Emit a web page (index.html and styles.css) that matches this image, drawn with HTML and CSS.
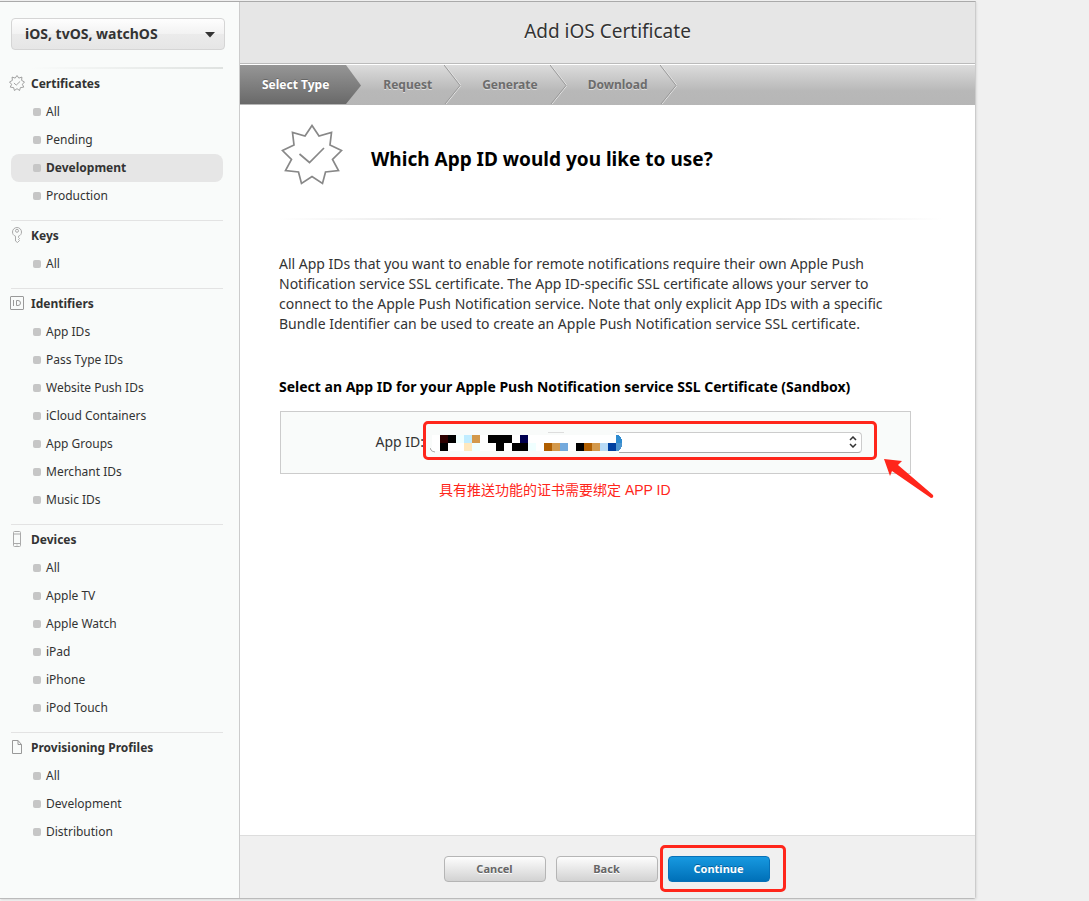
FILE: index.html
```html
<!doctype html>
<html lang="en">

<head>
    <meta charset="utf-8">
    <meta name="viewport" content="width=device-width, initial-scale=1">
    <title>Add iOS Certificate</title>
    <link rel="stylesheet" href="styles.css">
</head>

<body>

    <div class="wrapper">
        <aside class="sidebar">
            <div class="platform">
                <select class="platform-select" aria-label="Platform">
                    <option>iOS, tvOS, watchOS</option>
                </select>
                <svg class="caret" width="10" height="6" viewBox="0 0 10 6"><path d="M0 0h10L5 5.500z" fill="#333" /></svg>
            </div>

            <nav>
                <section class="group first">
                    <h2>
                        <svg width="16" height="16" viewBox="0 0 62 62" fill="none" stroke="#888" stroke-width="3">
                            <path d="M31 2L38 12L50 8L49 21L60 27L52 36L57 47L44 49L41 60L31 53L21 60L18 49L5 47L10 36L2 27L13 21L12 8L24 12Z" />
                            <path d="M19 31L28 39L43 25" />
                        </svg>
                        Certificates
                    </h2>
                    <ul>
                        <li><a href="#">All</a></li>
                        <li><a href="#">Pending</a></li>
                        <li><a href="#" class="active">Development</a></li>
                        <li><a href="#">Production</a></li>
                    </ul>
                </section>
                <section class="group">
                    <h2>
                        <svg width="16" height="16" viewBox="0 0 16 16" fill="none" stroke="#aaa">
                            <path d="M6.500 9.200C4.500 8.500 3.500 7 3.500 5a4.500 4.500 0 0 1 9 0c0 2-1 3.500-3 4.200v1.300l1 1-1 1 1 1-2 2-2-1.500z" />
                            <circle cx="8" cy="3.800" r="1.500" />
                        </svg>
                        Keys
                    </h2>
                    <ul>
                        <li><a href="#">All</a></li>
                    </ul>
                </section>
                <section class="group">
                    <h2>
                        <svg width="16" height="16" viewBox="0 0 16 16" fill="none" stroke="#999">
                            <rect x="1.500" y="1.500" width="13" height="13" rx=".5" />
                            <path d="M4.500 5v6M7.500 5.500v5h1.500q2.500 0 2.500-2.500t-2.500-2.500z" />
                        </svg>
                        Identifiers
                    </h2>
                    <ul>
                        <li><a href="#">App IDs</a></li>
                        <li><a href="#">Pass Type IDs</a></li>
                        <li><a href="#">Website Push IDs</a></li>
                        <li><a href="#">iCloud Containers</a></li>
                        <li><a href="#">App Groups</a></li>
                        <li><a href="#">Merchant IDs</a></li>
                        <li><a href="#">Music IDs</a></li>
                    </ul>
                </section>
                <section class="group">
                    <h2>
                        <svg width="16" height="16" viewBox="0 0 16 16" fill="none" stroke="#aaa">
                            <rect x="4.500" y=".5" width="7" height="15" rx="1" />
                            <path d="M4.500 3h7M4.500 12.500h7M7.500 14h1" />
                        </svg>
                        Devices
                    </h2>
                    <ul>
                        <li><a href="#">All</a></li>
                        <li><a href="#">Apple TV</a></li>
                        <li><a href="#">Apple Watch</a></li>
                        <li><a href="#">iPad</a></li>
                        <li><a href="#">iPhone</a></li>
                        <li><a href="#">iPod Touch</a></li>
                    </ul>
                </section>
                <section class="group">
                    <h2>
                        <svg width="16" height="16" viewBox="0 0 16 16" fill="none" stroke="#999">
                            <path d="M3.500 1.500h5.500l3.500 4v9h-9zM9 1.500v4h3.500" />
                        </svg>
                        Provisioning Profiles
                    </h2>
                    <ul>
                        <li><a href="#">All</a></li>
                        <li><a href="#">Development</a></li>
                        <li><a href="#">Distribution</a></li>
                    </ul>
                </section>
            </nav>
        </aside>

        <main class="main">
            <header class="title">
                <h1>Add iOS Certificate</h1>
            </header>

            <ol class="steps">
                <li class="current">
                    <span>Select Type</span>
                    <svg width="17" height="40" viewBox="0 0 17 40">
                        <defs>
                            <linearGradient id="dark" x1="0" y1="0" x2="0" y2="1">
                                <stop offset="0" stop-color="#969696" />
                                <stop offset="1" stop-color="#696969" />
                            </linearGradient>
                        </defs>
                        <path d="M0 0h1l15 20.500L1 39H0z" fill="url(#dark)" />
                    </svg>
                </li>
                <li>
                    <span>Request</span>
                    <svg width="17" height="40" viewBox="0 0 17 40" fill="none">
                        <path d="M1 0L17 20.500L2 39" stroke="#e4e4e4" />
                        <path d="M0 0L16 20.500L1 39" stroke="#999" />
                    </svg>
                </li>
                <li>
                    <span>Generate</span>
                    <svg width="17" height="40" viewBox="0 0 17 40" fill="none">
                        <path d="M1 0L17 20.500L2 39" stroke="#e4e4e4" />
                        <path d="M0 0L16 20.500L1 39" stroke="#999" />
                    </svg>
                </li>
                <li>
                    <span>Download</span>
                    <svg width="17" height="40" viewBox="0 0 17 40" fill="none">
                        <path d="M1 0L17 20.500L2 39" stroke="#e4e4e4" />
                        <path d="M0 0L16 20.500L1 39" stroke="#999" />
                    </svg>
                </li>
            </ol>

            <div class="content">
                <div class="question">
                    <svg width="62" height="62" viewBox="0 0 62 62" fill="none" stroke="#888" stroke-width="1.700">
                        <path d="M31 1.500L38 12L50.500 8.500L49 21L60.500 26.500L51.500 35.500L57.500 46.500L44.500 48L41.500 59.500L31 52.500L20.500 59.500L17.500 48L4.500 46.500L10.500 35.500L1.500 26.500L13 21L11.500 8.500L24 12Z" />
                        <path d="M18.500 30L28.500 38.500L43 24" />
                    </svg>
                    <h2>Which App ID would you like to use?</h2>
                </div>

                <p class="text">
                    All App IDs that you want to enable for remote notifications require their own Apple Push<br>
                    Notification service SSL certificate. The App ID-specific SSL certificate allows your server to<br>
                    connect to the Apple Push Notification service. Note that only explicit App IDs with a specific<br>
                    Bundle Identifier can be used to create an Apple Push Notification service SSL certificate.
                </p>

                <h3>Select an App ID for your Apple Push Notification service SSL Certificate (Sandbox)</h3>

                <div class="field">
                    <label for="appid">App ID:</label>
                    <div class="picker">
                        <select id="appid">
                            <option></option>
                        </select>
                        <svg class="updown" width="8" height="12" viewBox="0 0 8 12" fill="none" stroke="#333" stroke-width="1.500"><path d="M1 4l3-3 3 3M1 8l3 3 3-3" /></svg>
                        <svg class="mosaic" width="192" height="23" viewBox="0 0 192 23" shape-rendering="crispEdges">
                            <path d="M0 0h186v4H0zM0 19h189v4H0zM0 0h3v17H0z" fill="#f9fbfa" />
                            <path d="M118 1h16" stroke="#ddd" />
                            <path d="M2 4h188v16H2z" fill="#fff" />
                            <path d="M0 17q1 4 5 4" stroke="#aaa" fill="none" shape-rendering="auto" />
                            <path d="M10 4h8v8h-8z" fill="#2d0000" />
                            <path d="M18 4h8v8h-8zM58 4h24v8H58zM10 12h8v8h-8zM66 12h8v8h-8zM82 12h16v8H82zM146 12h8v8h-8z" fill="#000" />
                            <path d="M26 4h8v8h-8zM42 12h8v8h-8zM98 12h8v8h-8z" fill="#f0ffff" />
                            <path d="M34 4h8v8h-8z" fill="#c0ecff" />
                            <path d="M42 4h8v8h-8zM122 12h8v8h-8zM162 12h8v8h-8z" fill="#d3984a" />
                            <path d="M90 4h8v8h-8z" fill="#000050" />
                            <path d="M34 12h8v8h-8z" fill="#ffe8bd" />
                            <path d="M114 12h8v8h-8zM154 12h8v8h-8z" fill="#b05e00" />
                            <path d="M130 12h8v8h-8z" fill="#74aadd" />
                            <path d="M170 12h8v8h-8z" fill="#b8daf5" />
                            <path d="M178 12h8v8h-8z" fill="#0040a0" />
                            <path d="M186 4h3q3 3 3 8h-6z" fill="#2e8bd0" />
                            <path d="M186 12h6q0 5-3 8h-3z" fill="#4a94cf" />
                        </svg>
                        <div class="mark"></div>
                    </div>
                    <svg class="arrow" width="52" height="42" viewBox="0 0 52 42"><path d="M1 1L19 3L15 7L50 37Q51 40 48 40L9 13L7 18Z" fill="#ff261b" /></svg>
                </div>
                <p class="note" lang="zh">具有推送功能的证书需要绑定 APP ID</p>
            </div>

            <footer class="buttons">
                <button type="button">Cancel</button>
                <button type="button">Back</button>
                <div class="next">
                    <button type="submit" class="blue">Continue</button>
                    <div class="mark"></div>
                </div>
            </footer>
        </main>
    </div>

</body>

</html>
```
FILE: styles.css
```css
* {
    box-sizing: border-box;
}

body {
    margin: 0;
    padding: 1px 0 2px;
    background: #f0f0f0;
    color: #333;
    font-family: "Noto Sans", "Noto Sans CJK SC", sans-serif;
    font-size: 12px;
}

h1,
h2,
h3,
p,
ul,
ol {
    margin: 0;
    padding: 0;
}

ul,
ol {
    list-style: none;
}

.wrapper {
    display: flex;
    max-width: 976px;
    min-height: calc(100vh - 3px);
    border-top: 1px solid #aaa;
    border-right: 1px solid #ccc;
    border-bottom: 1px solid #bbb;
    border-radius: 0 0 3px 0;
    box-shadow: 1px 1px 2px #ddd;
}

.sidebar {
    flex: 0 0 240px;
    padding: 16px 14px 0 11px;
    background: #f9fbfa;
    border-right: 1px solid #ccc;
}

.platform {
    position: relative;
}

.platform-select {
    appearance: none;
    display: block;
    width: 100%;
    height: 32px;
    padding: 0 13px 2px;
    border: 1px solid #d5d5d5;
    border-radius: 4px;
    background: linear-gradient(#fefefe, #f2f2f2 50%, #ebebeb 50%, #e6e6e6);
    color: #333;
    font: bold 14px "Noto Sans", sans-serif;
}

.caret {
    position: absolute;
    top: 14px;
    right: 10px;
}

.group {
    margin-right: 2px;
    padding-bottom: 10px;
    border-top: 1px solid #e3e3e3;
}

.group.first {
    margin-top: 17px;
    border-top-width: 2px;
    border-image: linear-gradient(to right, transparent 10%, #dfe2e0) 1;
}

.group h2 {
    display: flex;
    align-items: center;
    gap: 6px;
    height: 29px;
    margin-left: -2px;
    padding-bottom: 1px;
    font-size: 12px;
}

.group a {
    display: flex;
    gap: 5px;
    height: 28px;
    padding-left: 22px;
    border-radius: 8px;
    color: #333;
    line-height: 28px;
    text-decoration: none;
}

.group a::before {
    content: "";
    width: 8px;
    height: 8px;
    margin-top: 10px;
    border-radius: 2px;
    background: #c6c6c6;
}

.group a.active {
    background: #e6e6e6;
    font-weight: bold;
}

.main {
    flex: 1;
    display: flex;
    flex-direction: column;
    background: #fff;
}

.title {
    height: 62px;
    border-bottom: 1px solid #bbb;
    background: #e6e6e6;
    text-align: center;
}

.title h1 {
    font-size: 19px;
    font-weight: normal;
    line-height: 58px;
    text-shadow: 0 1px 0 #fff;
}

.steps {
    display: flex;
    height: 40px;
    margin-top: 1px;
    background: linear-gradient(#dcdcdc, #b8b8b8 65%, #b6b6b6);
    color: #6c6c6c;
    font-weight: bold;
    line-height: 39px;
    text-shadow: 0 1px 0 #ddd;
}

.steps li {
    display: flex;
}

.steps span {
    padding: 0 12px 0 21px;
}

.steps .current {
    color: #fff;
    text-shadow: 0 -1px 0 #666;
}

.steps .current span {
    height: 39px;
    padding: 0 16px 0 22px;
    background: linear-gradient(#969696, #696969);
}

.content {
    flex: 1;
    padding: 19px 64px 0 39px;
}

.question {
    display: flex;
    align-items: center;
    gap: 28px;
    height: 96px;
    margin-right: -30px;
    padding: 0 0 32px 2px;
    border-bottom: 2px solid;
    border-image: linear-gradient(to right, transparent, #e6e6e6 25%, #e6e6e6 75%, transparent) 1;
}

.question h2 {
    padding-top: 8px;
    color: #000;
    font-size: 19px;
    line-height: 24px;
}

.text {
    margin-top: 34px;
    font-size: 14px;
    line-height: 20px;
    white-space: nowrap;
}

.content h3 {
    margin-top: 43px;
    color: #000;
    font-size: 14px;
    line-height: 20px;
    white-space: nowrap;
}

.field {
    position: relative;
    display: flex;
    align-items: center;
    justify-content: flex-end;
    gap: 6px;
    height: 63px;
    margin: 14px 0 0 1px;
    padding-right: 48px;
    border: 1px solid #ccc;
    background: #f9fbfa;
    font-size: 14px;
}

.field label {
    padding-bottom: 2px;
}

.picker {
    position: relative;
    width: 432px;
}

.picker select {
    appearance: none;
    display: block;
    width: 100%;
    height: 21px;
    border: 1px solid #ccc;
    border-bottom-color: #aaa;
    border-radius: 4px;
    background: #fff;
}

.updown {
    position: absolute;
    top: 4px;
    right: 5px;
}

.mosaic {
    position: absolute;
    top: -1px;
    left: 0;
}

.mark {
    position: absolute;
    inset: -11px -15px -7px -7px;
    border: 3px solid #ff261b;
    border-radius: 5px;
    pointer-events: none;
}

.arrow {
    position: absolute;
    top: 46px;
    right: -25px;
}

.note {
    margin: 6px 0 0 160px;
    color: #ff261b;
    font-family: "Liberation Sans", "Noto Sans CJK SC", sans-serif;
    font-size: 14px;
    line-height: 20px;
}

.buttons {
    display: flex;
    align-items: flex-start;
    justify-content: center;
    gap: 10px;
    height: 63px;
    padding: 20px 2px 0 0;
    border-top: 1px solid #ddd;
    background: #f0f0f0;
}

.buttons button {
    display: block;
    width: 102px;
    height: 26px;
    padding: 0 0 2px;
    border: 1px solid #b5b5b5;
    border-radius: 4px;
    background: linear-gradient(#fdfdfd, #d2d2d2);
    color: #666;
    font: bold 11px "Noto Sans", sans-serif;
    text-shadow: 0 1px 0 #fff;
}

.buttons .blue {
    border-color: #0771b8;
    background: linear-gradient(#1799e0, #0070b8);
    color: #fff;
    text-shadow: 0 -1px 0 #05609c;
}

.next {
    position: relative;
}

.next .mark {
    inset: -11px -16px -10px -8px;
}
```
